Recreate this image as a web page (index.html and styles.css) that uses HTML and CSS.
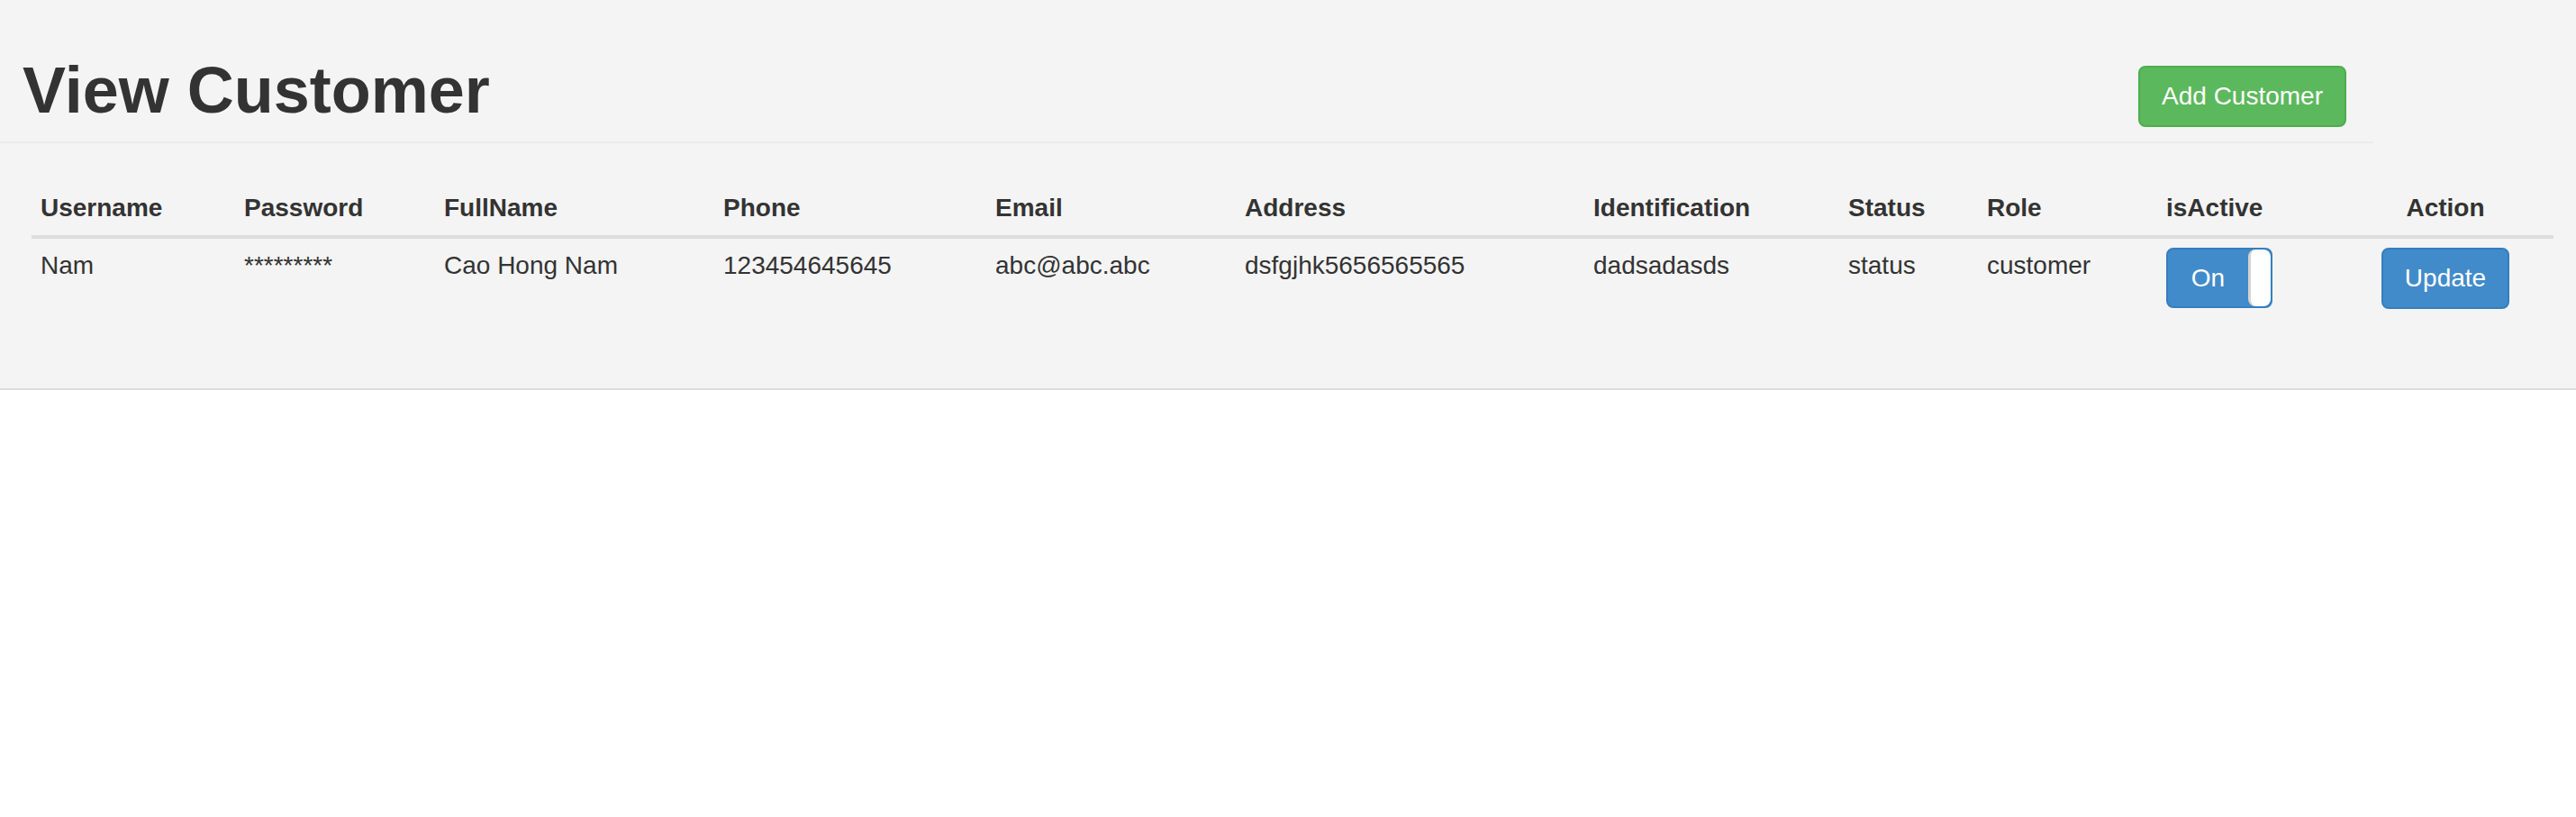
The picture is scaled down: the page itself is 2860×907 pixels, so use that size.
FILE: index.html
```html
<!DOCTYPE html>
<html>
<head>
<meta charset="utf-8">
<title>View Customer</title>
<link rel="stylesheet" href="styles.css">
</head>
<body>
<div class="panel">
  <div class="page-header">
    <h1 class="title">View Customer</h1>
    <button class="btn btn-success add-btn" type="button">Add Customer</button>
  </div>
  <table class="table">
    <colgroup>
      <col class="c-user"><col class="c-pass"><col class="c-full"><col class="c-phone"><col class="c-email"><col class="c-addr"><col class="c-id"><col class="c-status"><col class="c-role"><col class="c-active"><col class="c-action">
    </colgroup>
    <thead>
      <tr>
        <th>Username</th>
        <th>Password</th>
        <th>FullName</th>
        <th>Phone</th>
        <th>Email</th>
        <th>Address</th>
        <th>Identification</th>
        <th>Status</th>
        <th>Role</th>
        <th>isActive</th>
        <th class="center">Action</th>
      </tr>
    </thead>
    <tbody>
      <tr>
        <td>Nam</td>
        <td>*********</td>
        <td>Cao Hong Nam</td>
        <td>123454645645</td>
        <td>abc@abc.abc</td>
        <td>dsfgjhk5656565565</td>
        <td>dadsadasds</td>
        <td>status</td>
        <td>customer</td>
        <td>
          <div class="toggle"><span class="toggle-label">On</span><span class="toggle-handle"></span></div>
        </td>
        <td class="center"><button class="btn btn-primary" type="button">Update</button></td>
      </tr>
    </tbody>
  </table>
</div>
</body>
</html>
```

FILE: styles.css
```css
html, body {
  margin: 0;
  padding: 0;
  background: #ffffff;
}
body {
  font-family: "Liberation Sans", Arial, sans-serif;
  font-size: 28px;
  line-height: 1.42857;
  color: #333333;
}
.panel {
  background: #f4f4f4;
  border-bottom: 2px solid #dddddd;
  padding-bottom: 78px;
}
.page-header {
  width: 2580px;
  padding: 61px 30px 0 25px;
  height: 96px;
  border-bottom: 2px solid #ebebeb;
  display: flex;
  justify-content: space-between;
  align-items: flex-start;
}
.title {
  margin: 0;
  font-size: 72px;
  font-weight: bold;
  line-height: 1.1;
  color: #333333;
}
.btn {
  display: inline-block;
  font-family: "Liberation Sans", Arial, sans-serif;
  font-size: 28px;
  line-height: 1.42857;
  padding: 12px 24px;
  border: 2px solid transparent;
  border-radius: 8px;
  color: #ffffff;
  cursor: pointer;
  margin: 0;
}
.btn-success {
  background: #5cb85c;
  border-color: #4cae4c;
}
.btn-primary {
  background: #428bca;
  border-color: #357ebd;
}
.add-btn {
  margin-top: 12px;
}
.table {
  margin: 42px 0 0 35px;
  width: 2800px;
  border-collapse: collapse;
  border-spacing: 0;
  table-layout: fixed;
}
.c-user { width: 226px; }
.c-pass { width: 222px; }
.c-full { width: 310px; }
.c-phone { width: 302px; }
.c-email { width: 277px; }
.c-addr { width: 387px; }
.c-id { width: 283px; }
.c-status { width: 154px; }
.c-role { width: 199px; }
.c-active { width: 200px; }
.c-action { width: 240px; }
.table th,
.table td {
  padding: 10px;
  text-align: left;
  line-height: 1.42857;
}
.table th {
  font-weight: bold;
  vertical-align: bottom;
  border-bottom: 4px solid #dddddd;
}
.table td {
  vertical-align: top;
}
.table .center {
  text-align: center;
}
.toggle {
  box-sizing: border-box;
  width: 118px;
  height: 67px;
  background: #428bca;
  border: 2px solid #357ebd;
  border-radius: 8px;
  display: flex;
  align-items: stretch;
  overflow: hidden;
}
.toggle-label {
  flex: 1;
  display: flex;
  align-items: center;
  justify-content: center;
  color: #ffffff;
  font-size: 28px;
  padding-top: 1px;
}
.toggle-handle {
  width: 22px;
  background: #ffffff;
  border-left: 3px solid #d4d4d4;
  border-radius: 8px;
}
```
